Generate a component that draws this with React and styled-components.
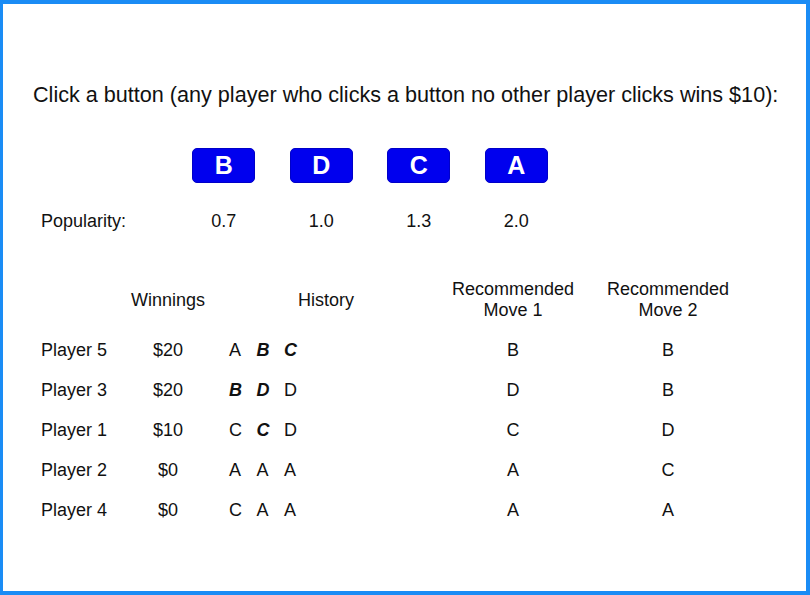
import React from "react";
import styled, { createGlobalStyle } from "styled-components";

const GlobalStyle = createGlobalStyle`
  html, body {
    margin: 0;
    padding: 0;
    background: #ffffff;
  }
  body {
    font-family: "Liberation Sans", Arial, sans-serif;
    color: #111111;
  }
`;

const buttons = ["B", "D", "C", "A"];
const popularity = ["0.7", "1.0", "1.3", "2.0"];

const players = [
  { name: "Player 5", winnings: "$20", history: [["A", false], ["B", true], ["C", true]], rec1: "B", rec2: "B" },
  { name: "Player 3", winnings: "$20", history: [["B", true], ["D", true], ["D", false]], rec1: "D", rec2: "B" },
  { name: "Player 1", winnings: "$10", history: [["C", false], ["C", true], ["D", false]], rec1: "C", rec2: "D" },
  { name: "Player 2", winnings: "$0", history: [["A", false], ["A", false], ["A", false]], rec1: "A", rec2: "C" },
  { name: "Player 4", winnings: "$0", history: [["C", false], ["A", false], ["A", false]], rec1: "A", rec2: "A" },
];

export default function App() {
  return (
    <>
      <GlobalStyle />
      <Frame>
        <Prompt>
          Click a button (any player who clicks a button no other player clicks wins $10):
        </Prompt>

        <ChoiceRow>
          <span />
          {buttons.map((b) => (
            <Cell key={b}>
              <ChoiceButton>{b}</ChoiceButton>
            </Cell>
          ))}
        </ChoiceRow>

        <PopularityRow>
          <Label>Popularity:</Label>
          {popularity.map((p, i) => (
            <Cell key={i}>{p}</Cell>
          ))}
        </PopularityRow>

        <Table>
          <HeadRow>
            <span />
            <HeadCell>Winnings</HeadCell>
            <HeadCell>History</HeadCell>
            <HeadCell>
              Recommended
              <br />
              Move 1
            </HeadCell>
            <HeadCell>
              Recommended
              <br />
              Move 2
            </HeadCell>
          </HeadRow>
          {players.map((p) => (
            <BodyRow key={p.name}>
              <Label>{p.name}</Label>
              <Cell>{p.winnings}</Cell>
              <History>
                {p.history.map(([m, won], i) => (
                  <Move key={i} $won={won}>
                    {m}
                  </Move>
                ))}
              </History>
              <Cell>{p.rec1}</Cell>
              <Cell>{p.rec2}</Cell>
            </BodyRow>
          ))}
        </Table>
      </Frame>
    </>
  );
}

const Frame = styled.div`
  box-sizing: border-box;
  width: 810px;
  height: 595px;
  border: 4px solid #1a8cf5;
  border-left-width: 3px;
  padding: 78px 30px 0 30px;
  display: flex;
  flex-direction: column;
`;

const Prompt = styled.div`
  font-size: 21.6px;
  line-height: 26px;
  text-align: center;
  white-space: nowrap;
`;

const ChoiceRow = styled.div`
  display: grid;
  grid-template-columns: 142px repeat(4, 97.5px);
  margin-top: 40px;
  height: 35px;
`;

const Cell = styled.div`
  display: flex;
  align-items: center;
  justify-content: center;
  font-size: 18px;
`;

const ChoiceButton = styled.button`
  width: 63px;
  height: 35px;
  padding: 0;
  border: 1px solid #0000c8;
  border-radius: 5px;
  background: #0000ee;
  color: #ffffff;
  font-family: "Liberation Sans", Arial, sans-serif;
  font-weight: bold;
  font-size: 25px;
  line-height: 33px;
  cursor: pointer;
`;

const PopularityRow = styled.div`
  display: grid;
  grid-template-columns: 142px repeat(4, 97.5px);
  margin-top: 27px;
  height: 22px;
  line-height: 22px;
`;

const Label = styled.div`
  display: flex;
  align-items: center;
  padding-left: 8px;
  font-size: 18px;
`;

const Table = styled.div`
  display: flex;
  flex-direction: column;
  margin-top: 46px;
`;

const columns = "95px 80px 236px 138px 172px";

const HeadRow = styled.div`
  display: grid;
  grid-template-columns: ${columns};
  align-items: center;
  height: 44px;
  margin-bottom: 8px;
`;

const HeadCell = styled.div`
  text-align: center;
  font-size: 18px;
  line-height: 21px;
`;

const BodyRow = styled.div`
  display: grid;
  grid-template-columns: ${columns};
  height: 40px;
  line-height: 40px;
`;

const History = styled.div`
  display: flex;
  align-items: center;
  padding-left: 21px;
  font-size: 18px;
`;

const Move = styled.span`
  display: inline-block;
  width: 27.5px;
  font-weight: ${(p) => (p.$won ? "bold" : "normal")};
  font-style: ${(p) => (p.$won ? "italic" : "normal")};
`;
